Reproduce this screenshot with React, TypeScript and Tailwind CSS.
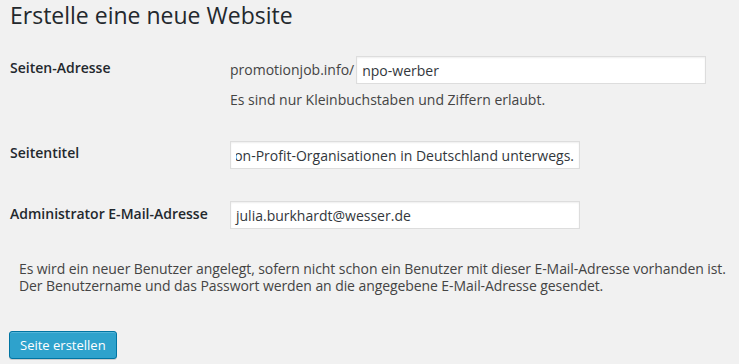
import React from "react";

export default function App() {
  const font = { fontFamily: '"Open Sans", "Noto Sans", sans-serif' };
  return (
    <div
      className="min-h-[364px] w-full bg-[#f1f1f1] text-[#444] px-[10px] overflow-hidden"
      style={font}
    >
      <h1 className="text-[23px] leading-[29px] font-normal text-[#23282d] pt-[1px]">
        Erstelle eine neue Website
      </h1>

      <div className="mt-[26px] flex">
        <div className="w-[220px] shrink-0 pt-[3px] text-[14px] leading-[18px] font-semibold text-[#23282d]">
          Seiten-Adresse
        </div>
        <div className="flex flex-col">
          <div className="flex items-center">
            <span className="text-[14px] leading-[18px] text-[#444] mr-[2px]">
              promotionjob.info/
            </span>
            <div className="h-[28px] w-[350px] border border-[#ddd] bg-white shadow-[inset_0_1px_2px_rgba(0,0,0,0.07)] px-[5px] flex items-center text-[14px] text-[#32373c]">
              npo-werber
            </div>
          </div>
          <p className="mt-[7px] text-[14px] leading-[18px] text-[#444]">
            Es sind nur Kleinbuchstaben und Ziffern erlaubt.
          </p>
        </div>
      </div>

      <div className="mt-[32px] flex">
        <div className="w-[220px] shrink-0 pt-[3px] text-[14px] leading-[18px] font-semibold text-[#23282d]">
          Seitentitel
        </div>
        <div className="h-[28px] w-[350px] border border-[#ddd] bg-white shadow-[inset_0_1px_2px_rgba(0,0,0,0.07)] pl-[5px] pr-[5px] flex items-center">
          <div className="flex-1 flex justify-end overflow-hidden whitespace-nowrap text-[14px] text-[#32373c]">
            <span className="shrink-0">
              Wir sind für Non-Profit-Organisationen in Deutschland unterwegs.
            </span>
          </div>
        </div>
      </div>

      <div className="mt-[32px] flex">
        <div className="w-[220px] shrink-0 pt-[4px] text-[14px] leading-[18px] font-semibold text-[#23282d]">
          Administrator E-Mail-Adresse
        </div>
        <div className="h-[28px] w-[350px] border border-[#ddd] bg-white shadow-[inset_0_1px_2px_rgba(0,0,0,0.07)] px-[5px] flex items-center text-[14px] text-[#32373c]">
          julia.burkhardt@wesser.de
        </div>
      </div>

      <p className="mt-[31px] pl-[9px] whitespace-nowrap text-[14px] tracking-[-0.08px] leading-[17px] text-[#444]">
        Es wird ein neuer Benutzer angelegt, sofern nicht schon ein Benutzer mit dieser E-Mail-Adresse vorhanden ist.
        <br />
        Der Benutzername und das Passwort werden an die angegebene E-Mail-Adresse gesendet.
      </p>

      <button className="mt-[37px] -ml-[1px] h-[28px] px-[10px] pb-[1px] rounded-[3px] border border-[#0074a2] bg-[#2ea2cc] text-white text-[13px] leading-[26px] shadow-[inset_0_1px_0_rgba(120,200,230,0.5),0_1px_0_rgba(0,0,0,0.15)]">
        Seite erstellen
      </button>
    </div>
  );
}
